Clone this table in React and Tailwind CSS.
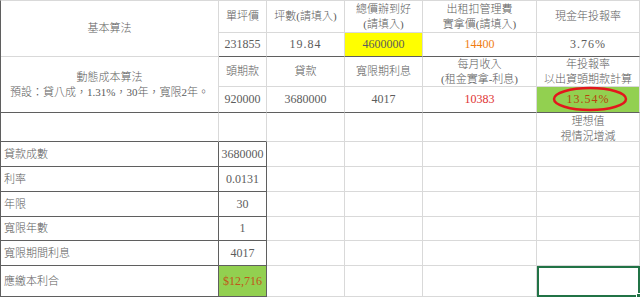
import React from 'react';

const dark = 'border-[#5f5f5f]';
const num = 'font-["Liberation_Serif"] text-[12px]';

function Cell({ className = '', children }) {
  return (
    <div className={`flex flex-col items-center justify-center border-b border-r border-[#d9d9d9] text-center leading-[15px] ${className}`}>
      {children}
    </div>
  );
}

const lowerRows = [
  ['貸款成數', '3680000'],
  ['利率', '0.0131'],
  ['年限', '30'],
  ['寬限年數', '1'],
  ['寬限期間利息', '4017'],
];

export default function App() {
  return (
    <div className="h-[298px] w-[640px] overflow-hidden bg-white">
      <div
        className={`grid grid-cols-[218px_48px_78px_78px_114px_103px] grid-rows-[32px_24px_30px_26px_29px_25px_25px_25px_24px_25px_31px] border-l border-t border-l-[#5f5f5f] border-t-[#d9d9d9] font-["Liberation_Serif","Noto_Sans_CJK_TC",serif] text-[11px] font-light text-[#5c5c5c]`}
      >
        {/* 基本算法 */}
        <Cell className={`row-span-2 ${dark} border-r-[#d9d9d9]`}>基本算法</Cell>
        <Cell>單坪價</Cell>
        <Cell>坪數(請填入)</Cell>
        <Cell>
          <span>總價辦到好</span>
          <span>(請填入)</span>
        </Cell>
        <Cell>
          <span>出租扣管理費</span>
          <span>實拿價(請填入)</span>
        </Cell>
        <Cell>現金年投報率</Cell>

        <Cell className={`border-b-[#5f5f5f] ${num}`}>231855</Cell>
        <Cell className={`border-b-[#5f5f5f] ${num} tracking-[1px]`}>19.84</Cell>
        <Cell className={`border-b-[#5f5f5f] bg-[#ffff00] ${num}`}>4600000</Cell>
        <Cell className={`border-b-[#5f5f5f] ${num} text-[#f07c10]`}>14400</Cell>
        <Cell className={`border-b-[#5f5f5f] ${num} tracking-[1px]`}>3.76%</Cell>

        {/* 動態成本算法 */}
        <Cell className="row-span-2 border-b-[#5f5f5f]">
          <span>動態成本算法</span>
          <span>預設：貸八成，1.31%，30年，寬限2年。</span>
        </Cell>
        <Cell>頭期款</Cell>
        <Cell>貸款</Cell>
        <Cell>寬限期利息</Cell>
        <Cell>
          <span>每月收入</span>
          <span>(租金實拿-利息)</span>
        </Cell>
        <Cell>
          <span>年投報率</span>
          <span>以出資頭期款計算</span>
        </Cell>

        <Cell className={`border-b-[#5f5f5f] ${num}`}>920000</Cell>
        <Cell className={`border-b-[#5f5f5f] ${num}`}>3680000</Cell>
        <Cell className={`border-b-[#5f5f5f] ${num}`}>4017</Cell>
        <Cell className={`border-b-[#5f5f5f] ${num} text-[#e03232]`}>10383</Cell>
        <Cell className={`relative border-b-[#5f5f5f] bg-[#92d050] ${num} font-normal tracking-[1px] text-[#b8430e]`}>
          <span>13.54%</span>
          <svg className="absolute left-[14px] top-[-1px]" width="78" height="26" viewBox="0 0 78 26">
            <ellipse cx="39" cy="13" rx="36" ry="11" fill="none" stroke="#e3161c" strokeWidth="2.5" />
          </svg>
        </Cell>

        {/* empty row */}
        <Cell className="border-b-[#5f5f5f]" />
        <Cell className="border-b-[#5f5f5f]" />
        <Cell />
        <Cell />
        <Cell />
        <Cell className="justify-start pt-[1px]">
          <span>理想值</span>
          <span>視情況增減</span>
        </Cell>

        {lowerRows.map(([label, value]) => (
          <React.Fragment key={label}>
            <Cell className="items-start border-b-[#5f5f5f] border-r-[#5f5f5f] pl-[3px]">{label}</Cell>
            <Cell className={`border-b-[#5f5f5f] border-r-[#5f5f5f] ${num}`}>{value}</Cell>
            <Cell />
            <Cell />
            <Cell />
            <Cell />
          </React.Fragment>
        ))}

        <Cell className="items-start border-b-[#5f5f5f] border-r-[#5f5f5f] pl-[3px]">應繳本利合</Cell>
        <Cell className={`border-b-[#5f5f5f] border-r-[#5f5f5f] bg-[#92d050] ${num} text-[#c0571a]`}>$12,716</Cell>
        <Cell />
        <Cell />
        <Cell />
        <Cell className="relative border-2! border-[#217346]!">
          <div className="absolute bottom-[-3px] right-[-3px] h-[5px] w-[5px] border border-white bg-[#217346]" />
        </Cell>
      </div>
    </div>
  );
}
